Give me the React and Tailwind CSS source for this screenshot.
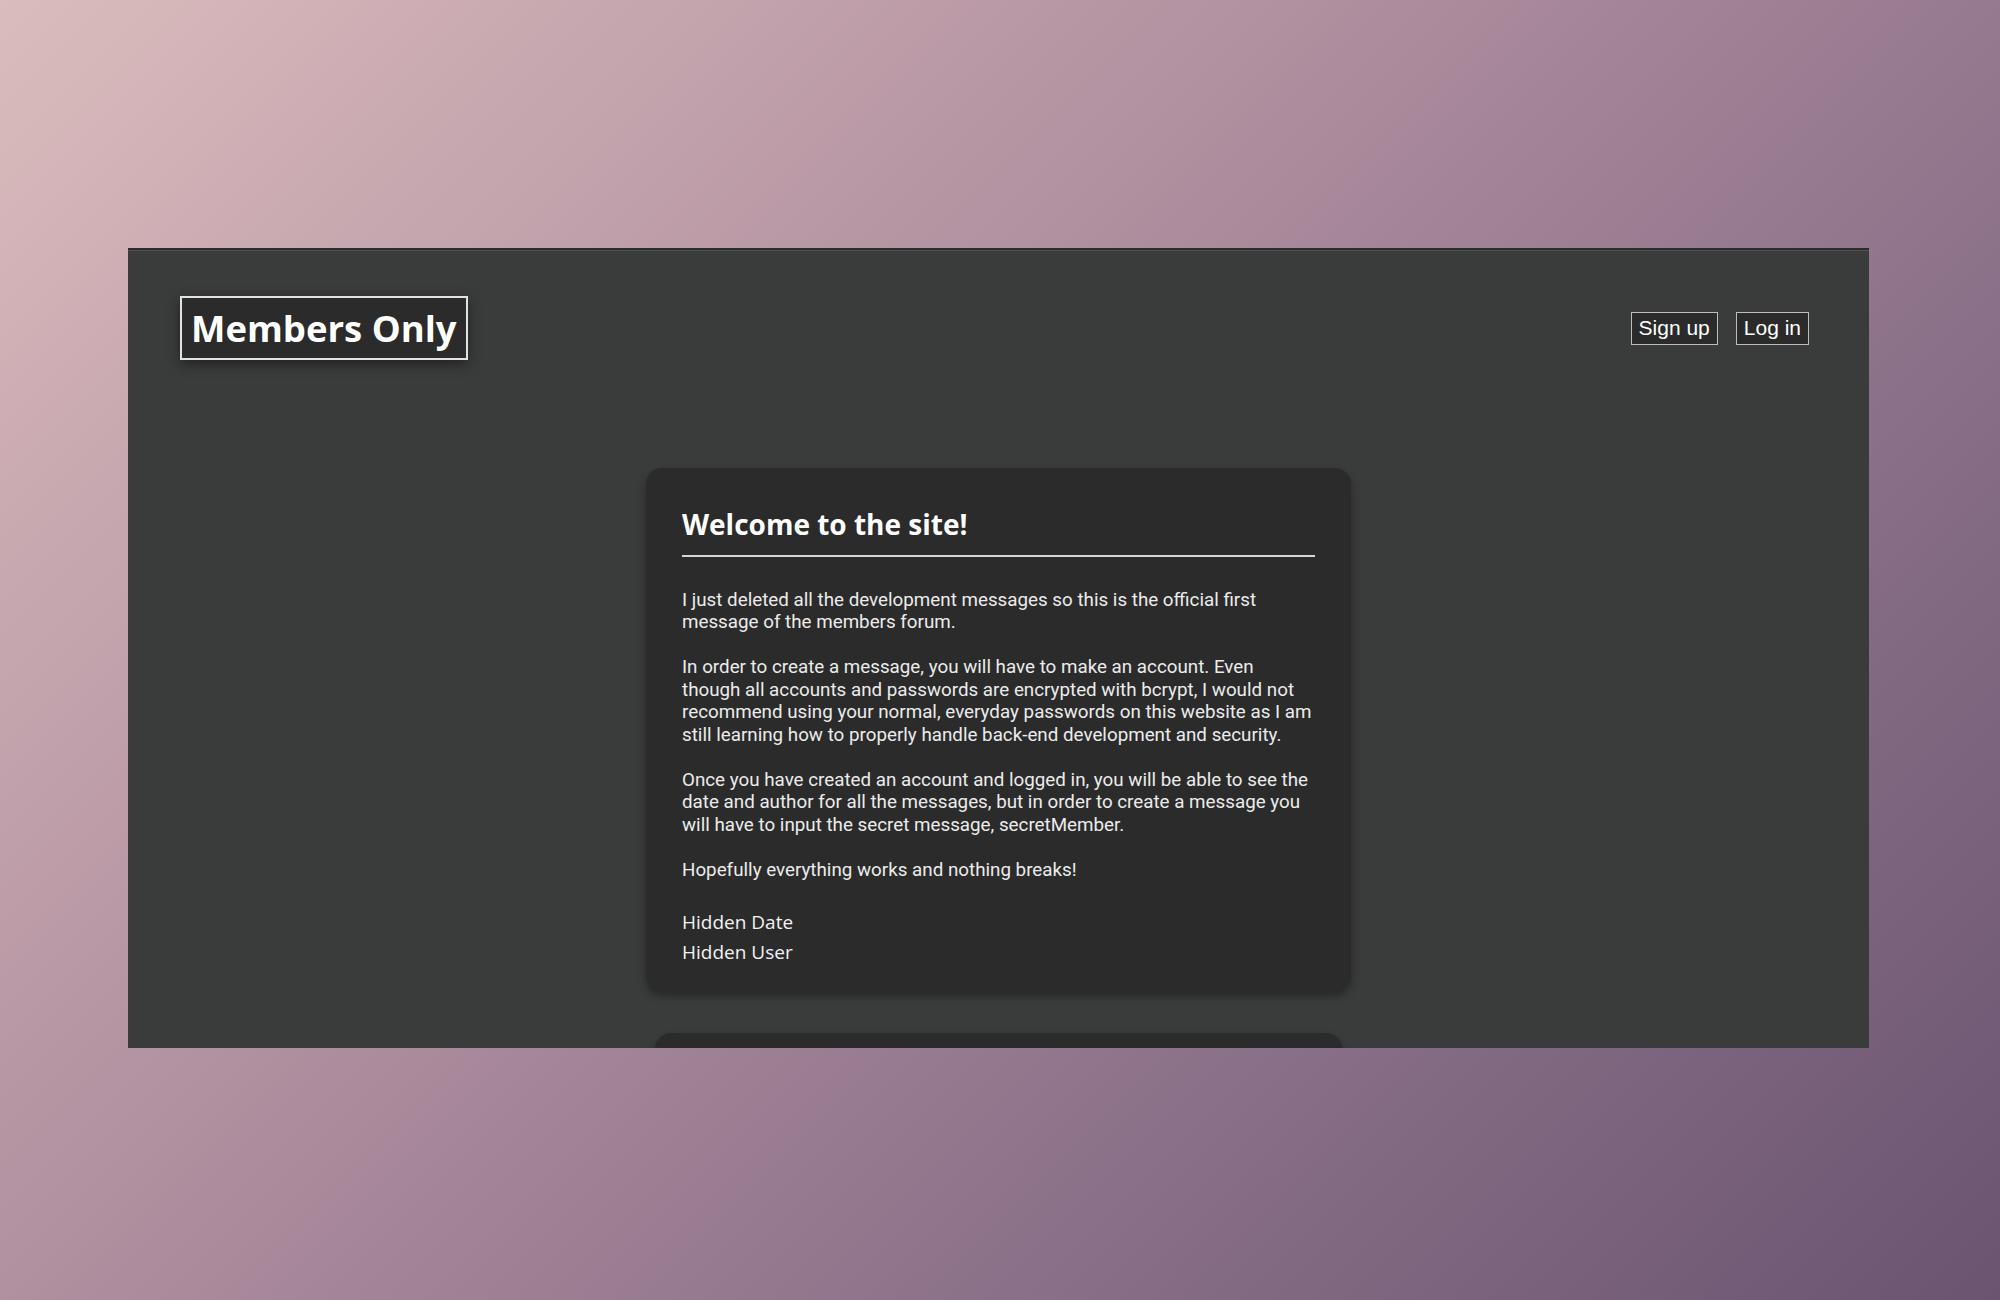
import React from 'react';

const paragraphs = [
  'I just deleted all the development messages so this is the official first message of the members forum.',
  'In order to create a message, you will have to make an account. Even though all accounts and passwords are encrypted with bcrypt, I would not recommend using your normal, everyday passwords on this website as I am still learning how to properly handle back-end development and security.',
  'Once you have created an account and logged in, you will be able to see the date and author for all the messages, but in order to create a message you will have to input the secret message, secretMember.',
  'Hopefully everything works and nothing breaks!',
];

const MessageCard = ({ title, body, date, user }) => (
  <div className="mx-auto w-[705px] rounded-[16px] bg-[#2a2b2a] px-[36px] pt-[37px] pb-[24px] shadow-[0_5px_8px_rgba(0,0,0,0.35)]">
    <h2 className="border-b-2 border-[#d6d6d6] pb-[10px] font-['Open_Sans',sans-serif] text-[28px] font-bold leading-[39.5px] text-white">
      {title}
    </h2>
    <div className="mt-[32px] font-['Roboto',sans-serif] text-[18.8px] leading-[22.5px] text-[#ececec]">
      {body.map((p, i) => (
        <p key={i} className="mb-[22.5px] last:mb-0">{p}</p>
      ))}
    </div>
    <div className="mt-[27px] font-['Open_Sans',sans-serif] text-[19px] leading-[29.5px] text-[#f2f2f2]">
      <p>{date}</p>
      <p>{user}</p>
    </div>
  </div>
);

const App = () => {
  return (
    <div className="h-[1300px] w-full bg-[linear-gradient(135deg,#dbbcbd_0%,#b08f9f_40%,#8a7088_70%,#6a5470_100%)] pl-[128px] pt-[248px]">
      <div className="h-[800px] w-[1741px] overflow-hidden border-t-[2px] border-[#2b2c2b] bg-[#3a3c3b]">
        <div className="h-px bg-[#505251]" />
        <header className="flex items-center justify-between pl-[52px] pr-[60px] pt-[45px]">
          <div className="flex h-[64px] items-center border-2 border-[#e2e2e2] bg-[#2a2b2a] px-[9px] shadow-[0_4px_12px_rgba(0,0,0,0.45)]">
            <h1 className="font-['Open_Sans',sans-serif] text-[36.5px] font-bold leading-none text-white">Members Only</h1>
          </div>
          <nav className="flex gap-[18px] font-['Liberation_Sans',Arial,sans-serif] text-[21px] text-white">
            <a className="flex h-[33px] items-center border border-[#bdbdbd] bg-[#2a2b2a] px-[7px]">Sign up</a>
            <a className="flex h-[33px] items-center border border-[#bdbdbd] bg-[#2a2b2a] px-[7px]">Log in</a>
          </nav>
        </header>
        <main className="mt-[108px] flex flex-col gap-[42px]">
          <MessageCard title="Welcome to the site!" body={paragraphs} date="Hidden Date" user="Hidden User" />
          <div className="mx-auto h-[200px] w-[687px] rounded-[16px] bg-[#2a2b2a] shadow-[0_5px_8px_rgba(0,0,0,0.35)]" />
        </main>
      </div>
    </div>
  );
};

export default App;
